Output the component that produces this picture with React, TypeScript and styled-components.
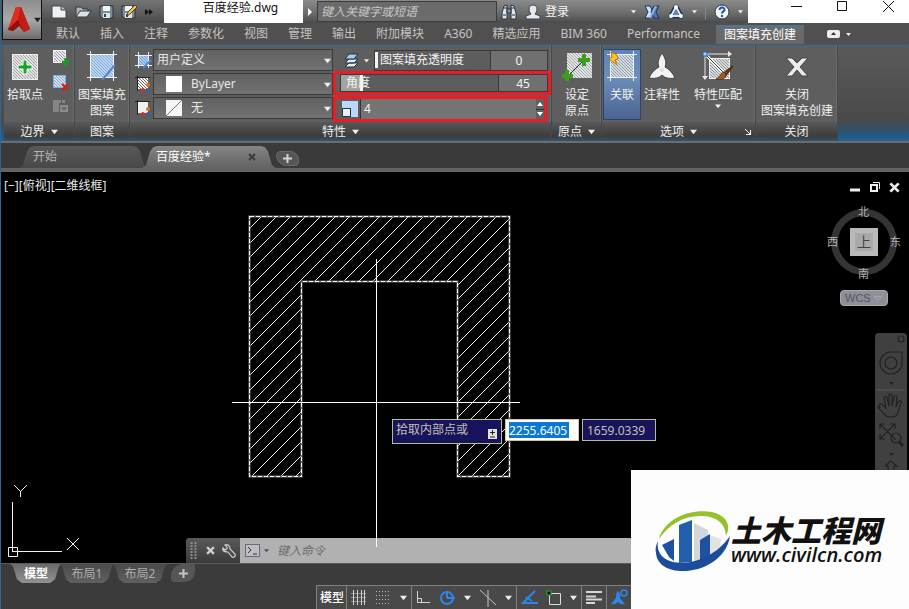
import React from "react";
import styled, { createGlobalStyle, css } from "styled-components";

const GlobalStyle = createGlobalStyle`
  * { box-sizing: border-box; }
  html, body { margin: 0; padding: 0; }
  body, button, input, select {
    font-family: "Noto Sans", "Noto Sans CJK SC", sans-serif;
    font-size: 12px;
    line-height: 16px;
  }
  button, input, select {
    margin: 0;
    padding: 0;
    border: 0;
    background: none;
    color: inherit;
    outline: none;
  }
  svg { display: block; flex: none; }
`;

const Window = styled.div`
  position: relative;
  display: flex;
  flex-direction: column;
  min-height: 100vh;
  overflow: hidden;
  background: #3b3b3b;
  border-left: 1px solid #2f6690;
  color: #e6e6e6;
`;

/* ---------- header ---------- */

const Header = styled.header`
  display: grid;
  grid-template-columns: 41px 1fr;
  grid-template-rows: 23px 21px;
  background: #505050;
  border-bottom: 1px solid #1f6391;
`;

const AppButton = styled.button`
  grid-row: 1 / 3;
  display: flex;
  align-items: center;
  gap: 3px;
  height: 40px;
  padding-left: 4px;
  margin-left: 1px;
  background: linear-gradient(#8d8d8d, #a9a9a9 50%, #6d6d6d);
  border: 1px solid #111;
  border-top: 0;
`;

const TitleBar = styled.div`
  display: flex;
  align-items: center;
  background: linear-gradient(#747474, #5c5c5c 60%, #4a4a4a);
`;

const QuickAccess = styled.div`
  display: flex;
  align-items: center;
  gap: 7px;
  width: 122px;
  padding-left: 9px;
`;

const IconButton = styled.button`
  display: flex;
  align-items: center;
  justify-content: center;
  flex: none;
`;

const DocumentTitle = styled.h1`
  width: 139px;
  height: 23px;
  margin: 0;
  padding-left: 14px;
  background: #fff;
  color: #111;
  font-size: 12px;
  font-weight: 400;
  line-height: 16px;
  text-align: center;
`;

const SearchBox = styled.input`
  width: 180px;
  height: 21px;
  margin-bottom: 1px;
  padding-left: 3px;
  background: #6b6b6b;
  border: 1px solid #3c3c3c;
  font-style: italic;
  &::placeholder { color: #c8c8c8; opacity: 1; }
`;

const TitleTools = styled.div`
  display: flex;
  flex: 1;
  align-items: center;
  gap: 8px;
  height: 23px;
  padding: 0 5px 0 3px;
  background: linear-gradient(#8b8b8b, #6a6a6a 60%, #4b4b4b);
`;

const SearchTools = styled.div`
  display: flex;
  align-items: center;
  gap: 4px;
`;

const UserTools = styled.div`
  display: flex;
  align-items: center;
  gap: 8px;
`;

const Spacer = styled.span`
  flex: 1;
`;

const Divider = styled.span`
  width: 1px;
  height: 16px;
  background: #858585;
`;

const SignIn = styled.button`
  display: flex;
  align-items: center;
  gap: 4px;
  color: #f4f4f4;
`;

const WindowControls = styled.div`
  display: flex;
  align-items: flex-start;
  justify-content: space-between;
  width: 161px;
  height: 23px;
  padding: 1px 15px 0 43px;
  background: #fff;
`;

const TabRow = styled.nav`
  display: flex;
  align-items: stretch;
  padding-left: 8px;
`;

const RibbonTab = styled.button<{ $active?: boolean }>`
  flex: none;
  padding: 1px 6px 0;
  margin-right: 8px;
  color: #c4c4c4;
  white-space: nowrap;
  ${(p) =>
    p.$active &&
    css`
      padding: 0 8px;
      margin: 2px 17px 0 2px;
      color: #fff;
      background: linear-gradient(#5b7182, #6a6a6a 40%, #676767);
    `}
`;

/* ---------- ribbon ---------- */

const Ribbon = styled.div`
  display: flex;
  height: 98px;
  padding-left: 3px;
  background: linear-gradient(#5a5a5a, #4a4a4a 78%, #2a5577 92%, #1c659c);
  border-bottom: 2px solid #6d6d6d;
`;

const Panel = styled.section<{ $w: number }>`
  display: flex;
  flex-direction: column;
  flex: none;
  width: ${(p) => p.$w}px;
  background: #5e5e5e;
  border-right: 1px solid #484848;
  box-shadow: inset -1px 0 #6b6b6b;
`;

const PanelBody = styled.div<{ $pad?: string }>`
  display: flex;
  flex: 1;
  padding: ${(p) => p.$pad ?? "4px 2px 0"};
`;

const PanelTitle = styled.div`
  display: flex;
  align-items: center;
  justify-content: center;
  gap: 6px;
  height: 19px;
  background: linear-gradient(#585858, #3c3c3c 75%, #31556f);
  color: #f0f0f0;
`;

const LauncherSlot = styled.span`
  position: absolute;
  right: 4px;
`;

const OptionsTitle = styled(PanelTitle)`
  position: relative;
`;

const BigButton = styled.button<{ $w?: number; $on?: boolean }>`
  display: flex;
  flex-direction: column;
  align-items: center;
  flex: none;
  width: ${(p) => (p.$w ? `${p.$w}px` : "auto")};
  height: 71px;
  padding-top: 2px;
  color: #f0f0f0;
  white-space: nowrap;
  & > svg:first-child { margin-bottom: 6px; }
  ${(p) =>
    p.$on &&
    css`
      background: linear-gradient(#5b86bb, #6d8dbb 40%, #4a6390);
      box-shadow: inset 0 0 0 1px #2b4569;
    `}
`;

const SmallStack = styled.div`
  display: flex;
  flex-direction: column;
  gap: 8px;
  padding: 0 0 0 8px;
`;

const PropertyColumn = styled.div`
  display: flex;
  flex-direction: column;
  gap: 2px;
  width: 198px;
`;

const PropertyRow = styled.div`
  display: flex;
  align-items: center;
  gap: 1px;
  height: 22px;
`;

const SelectShell = styled.label<{ $indent?: boolean }>`
  position: relative;
  display: flex;
  flex: 1;
  height: 22px;
  background: linear-gradient(#626262, #727272);
  border: 1px solid #3a3a3a;
  select {
    width: 100%;
    padding-left: ${(p) => (p.$indent ? 37 : 3)}px;
    appearance: none;
  }
  & > svg {
    position: absolute;
    right: 1px;
    top: 7px;
    pointer-events: none;
  }
`;

const Swatch = styled.span<{ $none?: boolean }>`
  position: absolute;
  left: 12px;
  top: 2px;
  width: 16px;
  height: 16px;
  background: ${(p) =>
    p.$none
      ? "linear-gradient(135deg, #f6f6f6 47%, #777 48%, #777 52%, #f6f6f6 53%)"
      : "#fff"};
`;

const ValueColumn = styled.div`
  display: flex;
  flex-direction: column;
  flex: 1;
`;

const TransparencyRow = styled.div`
  display: flex;
  align-items: center;
  height: 22px;
  padding: 0 3px 0 11px;
`;

const TransparencyGroup = styled.div`
  display: flex;
  width: 174px;
`;

const Highlight = styled.div<{ $inset?: boolean }>`
  display: flex;
  align-items: center;
  height: ${(p) => (p.$inset ? 26 : 24)}px;
  margin-top: ${(p) => (p.$inset ? 1 : 0)}px;
  margin-right: ${(p) => (p.$inset ? 4 : 0)}px;
  padding-left: ${(p) => (p.$inset ? 6 : 4)}px;
  border: 3px solid #ed1c24;
`;

const SliderShell = styled.label<{ $fill: number; $h: number }>`
  position: relative;
  display: flex;
  align-items: center;
  flex: 1;
  height: ${(p) => p.$h}px;
  border: 1px solid #3a3a3a;
  border-right: 0;
  padding-left: 5px;
  background: ${(p) =>
    `linear-gradient(90deg, #a2a2a2 ${p.$fill}px, #5d5d5d ${p.$fill}px)`};
  color: #f2f2f2;
  input {
    position: absolute;
    inset: 0;
    width: 100%;
    height: 100%;
    appearance: none;
    background: transparent;
  }
  input::-webkit-slider-thumb {
    appearance: none;
    width: 3px;
    height: 16px;
    background: #f2f2f2;
  }
`;

const ValueInput = styled.input<{ $w: number; $h: number }>`
  width: ${(p) => p.$w}px;
  height: ${(p) => p.$h}px;
  background: #707070;
  border: 1px solid #3a3a3a;
  color: #f4f4f4;
  text-align: center;
`;

const ScaleInput = styled.input`
  flex: 1;
  width: 0;
  height: 20px;
  margin-left: 2px;
  padding: 0 0 2px 3px;
  background: #747474;
  border-left: 1px solid #333;
  color: #f4f4f4;
`;

const Stepper = styled.span`
  display: flex;
  flex-direction: column;
  gap: 1px;
  width: 8px;
  height: 20px;
  background: #333;
  button {
    display: flex;
    flex: 1;
    align-items: center;
    justify-content: center;
    background: #606060;
  }
`;

/* ---------- file tabs ---------- */

const FileTabs = styled.div`
  display: flex;
  align-items: flex-end;
  height: 29px;
  padding: 0 0 4px 18px;
  background: linear-gradient(#3a3a3a 25px, #636363 25px);
`;

const FileTab = styled.div<{ $active?: boolean }>`
  display: flex;
  align-items: center;
  justify-content: space-between;
  width: ${(p) => (p.$active ? 134 : 129)}px;
  height: 22px;
  margin-right: ${(p) => (p.$active ? 0 : -6)}px;
  padding: 0 20px 0 14px;
  color: ${(p) => (p.$active ? "#fff" : "#b4b4b4")};
  background: ${(p) =>
    p.$active
      ? "linear-gradient(#858585, #636363)"
      : "linear-gradient(#595959, #484848)"};
  clip-path: polygon(
    0 100%, 4px 88%, 8px 25%, 11px 6%, 15px 0,
    calc(100% - 15px) 0, calc(100% - 11px) 6%, calc(100% - 8px) 25%,
    calc(100% - 4px) 88%, 100% 100%
  );
`;

const AddTab = styled.button`
  display: flex;
  align-items: center;
  justify-content: center;
  width: 23px;
  height: 15px;
  margin-bottom: 2px;
  background: #565656;
  border: 1px solid #6a6a6a;
  border-radius: 5px 10px 4px 12px;
`;

/* ---------- canvas ---------- */

const Canvas = styled.main`
  position: relative;
  flex: 1;
  min-height: 391px;
  overflow: hidden;
  background: #000;
`;

const ViewLabel = styled.div`
  padding: 6px 3px;
  color: #e8e8e8;
`;

const Drawing = styled.svg`
  position: absolute;
  left: 0;
  top: 0;
  width: 100%;
  height: 100%;
  pointer-events: none;
`;

const UcsIcon = styled.svg`
  position: absolute;
  left: 4px;
  bottom: 0;
`;

const ViewportControls = styled.div`
  position: absolute;
  top: 9px;
  right: 9px;
  display: flex;
  gap: 8px;
`;

const Compass = styled.div`
  position: absolute;
  top: 32px;
  right: 7px;
  width: 76px;
  height: 76px;
  color: #b5b5b5;
  font-size: 11px;
  line-height: 12px;
`;

const CompassRing = styled.div`
  position: absolute;
  inset: 5px;
  border: 7px solid #343434;
  border-radius: 50%;
`;

const CompassFace = styled.button`
  position: absolute;
  left: 24px;
  top: 24px;
  width: 28px;
  height: 28px;
  background: #a9a9a9;
  border: 5px solid #b9b9b9;
  color: #444;
  font-size: 14px;
`;

const CompassPoint = styled.span<{ $at: "n" | "e" | "s" | "w" }>`
  position: absolute;
  ${(p) =>
    ({
      n: "left: 32px; top: 2px;",
      e: "right: 1px; top: 32px;",
      s: "left: 32px; bottom: 0;",
      w: "left: 1px; top: 32px;",
    })[p.$at]}
`;

const WcsButton = styled.button`
  position: absolute;
  top: 118px;
  right: 21px;
  display: flex;
  align-items: center;
  justify-content: space-between;
  width: 48px;
  height: 16px;
  padding: 0 5px 0 4px;
  background: #8f8f97;
  border: 1px solid #a9a9b0;
  border-radius: 4px;
  color: #53535b;
  font-family: "Liberation Sans", sans-serif;
  font-size: 11px;
  line-height: 12px;
`;

const NavBar = styled.div`
  position: absolute;
  top: 161px;
  right: 2px;
  bottom: 0;
  width: 32px;
  background: #404040;
  border-radius: 4px 4px 0 0;
`;

const DynamicPrompt = styled.div`
  position: absolute;
  left: 391px;
  top: 247px;
  display: flex;
  align-items: flex-start;
  gap: 3px;
  color: #c2c2ac;
`;

const PromptText = styled.label`
  display: flex;
  justify-content: space-between;
  width: 110px;
  height: 25px;
  padding: 2px 4px 0 3px;
  background: #17135c;
  border: 1px solid #b9bd8b;
  svg { margin-top: 7px; }
`;

const ActiveCoordinate = styled.input`
  width: 74px;
  height: 22px;
  padding: 0 3px;
  background: linear-gradient(90deg, #0a78d6, #0a78d6) 3px 2px / 60px 16px no-repeat #fff;
  border: 1px solid #d8c69a;
  color: #fff;
`;

const Coordinate = styled.input`
  width: 74px;
  height: 22px;
  padding: 0 4px;
  background: #17135c;
  border: 1px solid #b9bd8b;
  color: #c2c2ac;
`;

const CommandBar = styled.div`
  position: absolute;
  left: 185px;
  right: 0;
  bottom: 0;
  display: flex;
  height: 25px;
`;

const CommandTools = styled.div`
  display: flex;
  align-items: center;
  justify-content: space-between;
  width: 54px;
  padding: 0 4px;
  background: linear-gradient(#5a5a5a, #3a3a3a);
  border-radius: 3px 0 0 0;
`;

const CommandEntry = styled.label`
  display: flex;
  flex: 1;
  align-items: center;
  gap: 4px;
  padding-left: 5px;
  background: #b1b1b1;
  input {
    width: 50%;
    margin-left: 4px;
    font-style: italic;
    color: #333;
  }
  input::placeholder { color: #6d6d6d; opacity: 1; }
`;

/* ---------- footer ---------- */

const Footer = styled.footer`
  display: flex;
  flex-direction: column;
  justify-content: space-between;
  height: 46px;
  background: #3b3b3b;
  border-top: 1px solid #5a5a5a;
`;

const LayoutTabs = styled.div`
  display: flex;
  height: 19px;
  padding-left: 9px;
`;

const LayoutTab = styled.button<{ $active?: boolean }>`
  width: ${(p) => (p.$active ? 52 : 56)}px;
  margin-right: -3px;
  color: ${(p) => (p.$active ? "#fff" : "#adadad")};
  font-weight: ${(p) => (p.$active ? 700 : 400)};
  background: ${(p) =>
    p.$active
      ? "linear-gradient(#6a6a6a, #919191)"
      : "linear-gradient(#4a4a4a, #606060)"};
  clip-path: polygon(
    0 0, 100% 0, calc(100% - 3px) 12%, calc(100% - 7px) 80%, calc(100% - 12px) 100%,
    12px 100%, 7px 80%, 3px 12%
  );
`;

const AddLayout = styled.button`
  display: flex;
  align-items: center;
  justify-content: center;
  width: 24px;
  height: 18px;
  margin-left: 6px;
  background: #565656;
  border-radius: 12px 2px 10px 3px;
`;

const StatusBar = styled.div`
  display: flex;
  height: 24px;
  margin-left: 315px;
  background: #494949;
  border-top: 1px solid #808080;
  border-left: 1px solid #808080;
`;

const StatusGroup = styled.div<{ $gap?: number }>`
  display: flex;
  align-items: center;
  gap: ${(p) => p.$gap ?? 8}px;
  padding: 0 4px;
  border-right: 1px solid #808080;
  color: #fff;
  font-weight: 500;
`;

const ModelButton = styled(StatusGroup).attrs({ as: "button" })`
  padding: 0 2px 0 3px;
`;

const SiteLogo = styled.a`
  position: absolute;
  right: 0;
  bottom: 0;
  display: flex;
  align-items: center;
  width: 278px;
  height: 139px;
  padding: 2px 0 0 24px;
  background: #fdfdfd;
  color: #111;
  text-decoration: none;
`;

const SiteText = styled.span`
  display: flex;
  flex-direction: column;
  font-style: italic;
  white-space: nowrap;
`;

const SiteName = styled.strong`
  font-family: "Noto Sans CJK SC", sans-serif;
  font-size: 30px;
  font-weight: 900;
  line-height: 29px;
`;

const SiteUrl = styled.span`
  font-family: "Open Sans", sans-serif;
  font-size: 20px;
  font-weight: 600;
  line-height: 22px;
`;

/* ---------- icons ---------- */

const Caret = ({ size = 7, color = "#f0f0f0" }: { size?: number; color?: string }) => (
  <svg width={size} height={size} viewBox="0 0 8 8">
    <path d="M0 2h8L4 7z" fill={color} />
  </svg>
);

const Plus = ({ color = "#d4d4d4" }: { color?: string }) => (
  <svg width="9" height="9" viewBox="0 0 9 9">
    <path d="M4.5 0v9M0 4.5h9" stroke={color} strokeWidth="2" />
  </svg>
);

const hatchLines = (w: number, h: number, step: number) =>
  Array.from({ length: Math.ceil((w + h) / step) }, (_, i) => `M${i * step - h} 0l${h} ${h}`).join("");

const HatchTile = ({
  size,
  fill = "#d4dadd",
  stroke = "#8d979c",
}: {
  size: number;
  fill?: string;
  stroke?: string;
}) => (
  <svg x="0" y="0" width={size} height={size} viewBox={`0 0 ${size} ${size}`}>
    <rect width={size} height={size} fill={fill} />
    <path d={hatchLines(size, size, 3)} stroke={stroke} strokeWidth="1" />
  </svg>
);

const AppLogo = () => (
  <svg width="24" height="26" viewBox="0 0 24 26">
    <path d="M9 0h5l9 22-6 3-5-6-6 5-5-1z" fill="#a5130f" />
    <path d="M9 0h5l-3 13L1 22z" fill="#e02c23" />
    <path d="M14 0l9 22-6 3-6-12z" fill="#c41d17" />
    <path d="M1 22l10-9 1 6-6 5z" fill="#8f100c" />
  </svg>
);

const NewIcon = () => (
  <svg width="17" height="14" viewBox="0 0 17 14">
    <path d="M1 1h9l5 4v8H1z" fill="#f0f0f0" stroke="#3d4750" />
    <path d="M10 1v4h5" fill="#b9c0c6" stroke="#3d4750" />
  </svg>
);

const OpenIcon = () => (
  <svg width="17" height="14" viewBox="0 0 17 14">
    <path d="M1 12V2h5l2 2h5v3" fill="#aeb5bb" stroke="#2e3942" />
    <path d="M1 12l4-6h11l-4 6z" fill="#dfe2e5" stroke="#2e3942" />
  </svg>
);

const SaveIcon = ({ pencil }: { pencil?: boolean }) => (
  <svg width={pencil ? 17 : 15} height="16" viewBox={pencil ? "0 0 17 16" : "0 0 15 16"}>
    <path d="M1 2h13v12H3l-2-2z" fill="#7c8b99" stroke="#25323d" />
    <path d="M4 2h7v5H4z" fill="#f2f4f6" />
    <path d="M4 9h7v5H4z" fill="#dfe4e8" />
    <path d="M5 10h2v3H5z" fill="#34424e" />
    {pencil && <path d="M6 12l1-4 7-7 2 2-7 7z" fill="#f3c25b" stroke="#57411c" />}
  </svg>
);

const MoreIcon = () => (
  <svg width="8" height="6" viewBox="0 0 8 6">
    <path d="M0 0l4 3-4 3zM4 0l4 3-4 3z" fill="#111" />
  </svg>
);

const BinocularsIcon = () => (
  <svg width="16" height="16" viewBox="0 0 16 16">
    <path d="M3 2l3-1v14H1V9zM10 1l3 1 2 7v6h-5z" fill="#dfe5ea" stroke="#26323d" />
    <path d="M6 5h4v4H6z" fill="#8795a1" stroke="#26323d" />
    <path d="M2 11h3M11 11h3M3 4h3M10 4h3" stroke="#26323d" />
  </svg>
);

const UserIcon = () => (
  <svg width="16" height="16" viewBox="0 0 16 16">
    <path d="M8 1c3 0 4 2 4 4s-1 4-2 5l5 2v3H1v-3l5-2C5 9 4 7 4 5s1-4 4-4z" fill="#e6eaed" stroke="#36424c" />
  </svg>
);

const ExchangeIcon = () => (
  <svg width="16" height="14" viewBox="0 0 16 14">
    <path d="M1 1h5l3 6-3 6H1l3-6z" fill="#d3e0f1" stroke="#163564" />
    <path d="M15 1h-5L7 7l3 6h5l-3-6z" fill="#4f78b6" stroke="#163564" />
    <path d="M6 13L12 1" stroke="#8fb0dd" strokeWidth="2" />
  </svg>
);

const ShareIcon = () => (
  <svg width="16" height="15" viewBox="0 0 16 15">
    <path d="M8 3L3 12h10z" fill="none" stroke="#1c3259" strokeWidth="5" strokeLinejoin="round" />
    <path d="M8 3L3 12h10z" fill="none" stroke="#dfe8f5" strokeWidth="2" strokeLinejoin="round" />
    <path d="M8 5L5 11h6z" fill="#6b85ad" />
    <circle cx="8" cy="3" r="2" fill="#fff" />
    <circle cx="3" cy="12" r="2" fill="#fff" />
    <circle cx="13" cy="12" r="2" fill="#fff" />
  </svg>
);

const HelpIcon = () => (
  <svg width="16" height="16" viewBox="0 0 16 16">
    <circle cx="8" cy="8" r="7" fill="#f2f6fb" stroke="#26364a" />
    <path d="M5.500 6c0-3.500 5.500-3 5 0c-.3 1.500-2.500 1.500-2.500 3.500" fill="none" stroke="#2256a6" strokeWidth="2" />
    <circle cx="8" cy="12" r="1.200" fill="#2256a6" />
  </svg>
);

const PickPointIcon = () => (
  <svg width="26" height="30" viewBox="0 0 26 30">
    <svg y="3" width="26" height="26">
      <HatchTile size={26} fill="#dfe1e2" stroke="#a2a6a8" />
    </svg>
    <rect x="0.500" y="3.500" width="25" height="25" fill="none" stroke="#eee" />
    <path d="M11 9h4v5h5v4h-5v5h-4v-5H6v-4h5z" fill="#16a524" stroke="#fff" />
  </svg>
);

const SelectBoundaryIcon = ({ remove }: { remove?: boolean }) => (
  <svg width="17" height="17" viewBox="0 0 17 17">
    <svg x="1" y="1" width="13" height="13">
      <HatchTile size={13} fill={remove ? "#cfe2f5" : "#e8e8e8"} stroke="#9aa3aa" />
    </svg>
    <rect x="1.500" y="1.500" width="12" height="12" fill="none" stroke={remove ? "#6fb2ee" : "#f2f2f2"} />
    {remove ? (
      <path d="M10 10l6 6M16 10l-6 6" stroke="#d81d17" strokeWidth="2" />
    ) : (
      <path d="M13.500 9v8M10 13h7" stroke="#12a01d" strokeWidth="2.500" />
    )}
  </svg>
);

const RecreateIcon = () => (
  <svg width="17" height="14" viewBox="0 0 17 14">
    <path d="M1 1h8v3H7v9H1z" fill="#858585" />
    <path d="M10 1h3v3h-3z" fill="#858585" />
    <path d="M8 6h8v7H8z" fill="#8c8c8c" />
    <path d="M10 8h4v3h-4z" fill="#6b6b6b" />
  </svg>
);

const HatchPatternIcon = ({ bolt }: { bolt?: boolean }) => (
  <svg width="30" height="30" viewBox="0 0 30 30">
    <svg x="4" y="4" width="22" height="22">
      <HatchTile size={22} fill={bolt ? "#d5dde4" : "#b9d6f6"} stroke={bolt ? "#8d99a5" : "#86a8d0"} />
    </svg>
    <path d="M3.500 0v30M26.500 0v30M0 3.500h30M0 26.500h30" stroke="#f0f4f8" />
    {bolt ? (
      <path d="M4 1l6 3 1 4-3 1 2 5-8-6 3-2z" fill="#ffc52e" stroke="#c86a10" />
    ) : (
      <path d="M28 14L15 29" stroke="#5b86bd" strokeWidth="2" />
    )}
  </svg>
);

const SmallPatternIcon = () => (
  <svg width="17" height="17" viewBox="0 0 17 17">
    <svg x="4" y="4" width="10" height="10">
      <HatchTile size={10} fill="#a9cdf5" stroke="#6f9bd0" />
    </svg>
    <path d="M3.500 0v16M13.500 0v16M0 3.500h17M0 13.500h17" stroke="#f0f4f8" />
    <path d="M16 8l-8 8" stroke="#4c86d0" strokeWidth="2" />
  </svg>
);

const ColorIcon = ({ background }: { background?: boolean }) => (
  <svg width="17" height="17" viewBox="0 0 17 17">
    <svg x="3" y="2" width="10" height="11">
      {background ? <rect width="11" height="11" fill="#f1f1f1" /> : <HatchTile size={11} fill="#fff" stroke="#666" />}
    </svg>
    <path d="M2.500 0v15M0 1.500h15" stroke="#222" />
    <circle cx="8" cy="14" r="2" fill="#d13023" />
    <circle cx="13" cy="9" r="2" fill="#e5741d" />
    <circle cx="13" cy="14" r="2" fill="#2d65b3" />
  </svg>
);

const LayersIcon = () => (
  <svg width="15" height="15" viewBox="0 0 15 15">
    <path d="M1 14l4-4h9l-4 4zM1 10l4-4h9l-4 4z" fill="#e7edf2" stroke="#26343f" />
    <path d="M1 6l4-5h9l-4 5z" fill="#a9cdf0" stroke="#26343f" />
  </svg>
);

const ScaleIcon = () => (
  <svg width="16" height="16" viewBox="0 0 16 16">
    <rect width="16" height="16" fill="#b9d8fb" />
    <rect x="0.500" y="7.500" width="8" height="8" fill="#eceff1" stroke="#26364a" />
  </svg>
);

const OriginIcon = () => (
  <svg width="30" height="30" viewBox="0 0 30 30">
    <svg x="5" y="2" width="25" height="25">
      <HatchTile size={25} fill="#e2e4e5" stroke="#a4a8aa" />
    </svg>
    <path d="M6 25L22 9" stroke="#222" />
    <path d="M22 3v12M16 9h12M5 19v11M0 25h11" stroke="#3c9d1e" strokeWidth="4" />
  </svg>
);

const AnnotativeIcon = () => (
  <svg width="28" height="30" viewBox="0 0 28 30">
    <path d="M14 2c3 5 5 9 3 14c4 2 8 6 10 11c-6 1-10 0-13-3c-3 3-7 4-13 3c2-5 6-9 10-11c-2-5 0-9 3-14z" fill="#f4f4f4" stroke="#444" />
    <circle cx="14" cy="19" r="2" fill="#dcdcdc" />
  </svg>
);

const MatchIcon = () => (
  <svg width="32" height="30" viewBox="0 0 32 30">
    <svg x="7" y="7" width="21" height="21">
      <HatchTile size={21} />
    </svg>
    <rect x="7.500" y="7.500" width="20" height="20" fill="none" stroke="#f3f3f3" />
    <path d="M4 3h23M3 4v22" stroke="#e9e9e9" />
    <path d="M26 0l4 3-4 3zM0 25l3 4 3-4z" fill="#e9e9e9" />
    <path d="M5 5l20 20" stroke="#fff" strokeWidth="3" />
    <path d="M5 5l20 20" stroke="#333" />
    <rect x="1" y="1" width="4" height="4" fill="#9fd0ff" stroke="#1f67b5" />
    <path d="M31 15l-9 7 2 2z" fill="#d38a45" stroke="#5b3311" strokeWidth="2" />
    <path d="M22 21c-4 1-3 5-8 7c5 2 10 0 10-5z" fill="#9c5a26" stroke="#5b3311" />
  </svg>
);

const CloseBigIcon = () => (
  <svg width="24" height="30" viewBox="0 0 24 30">
    <path d="M1 7h6l5 5 5-5h6l-8 9 8 9h-6l-5-6-5 6H1l8-9z" fill="#ececec" stroke="#444" />
  </svg>
);

const LauncherIcon = () => (
  <svg width="6" height="6" viewBox="0 0 6 6">
    <path d="M0 0l5 5M1 5.500h5M5.500 1v5" stroke="#fff" />
  </svg>
);

const CloseSmall = ({ color, size = 8 }: { color: string; size?: number }) => (
  <svg width={size} height={size} viewBox="0 0 8 8">
    <path d="M1 1l6 6M7 1L1 7" stroke={color} strokeWidth="2" />
  </svg>
);

const WrenchIcon = () => (
  <svg width="14" height="14" viewBox="0 0 14 14">
    <path
      d="M1 4l2 2 2-1V3L3 1c3-1 5 1 5 4l5 5c1 2-1 4-3 3L6 8C3 8 0 7 1 4z"
      fill="#4a4a4a"
      stroke="#d0d0d0"
      strokeWidth="1.200"
    />
  </svg>
);

/* ---------- drawing ---------- */

const OUTLINE = "M248.500 44.500H508.500V304.500H456.500V109.500H300.500V304.500H248.500Z";

const hatchOffsets = Array.from({ length: 36 }, (_, i) => Math.round(305 + i * 14.7));

const HatchedShape = () => (
  <Drawing>
    <defs>
      <clipPath id="outline">
        <path d={OUTLINE} />
      </clipPath>
    </defs>
    <g clipPath="url(#outline)" stroke="#f2f2f2" shapeRendering="crispEdges">
      {hatchOffsets.map((c) => (
        <path key={c} d={`M${c - 44} 44L${c - 305} 305`} />
      ))}
    </g>
    <path d={OUTLINE} fill="none" stroke="#777" strokeWidth="2" />
    <path d={OUTLINE} fill="none" stroke="#fff" strokeDasharray="4 2" shapeRendering="crispEdges" />
    <path d="M231 230.500H519M375.500 87V375" stroke="#fff" shapeRendering="crispEdges" />
  </Drawing>
);

const NavigationTools = () => (
  <svg width="32" height="140" viewBox="0 0 32 140" fill="none" stroke="#222" strokeWidth="1.200">
    <circle cx="26" cy="6" r="3" />
    <path d="M16 19h11v11a11 11 0 1 1-11-11z" />
    <circle cx="16" cy="30" r="6" />
    <path d="M14 49h5l-2.500 3zM14 120h5l-2.500 3z" fill="#222" stroke="none" />
    <path d="M2 57h28" stroke="#585858" />
    <path d="M5 74c-2-3 1-4 3-2l3 4-2-11c0-2 3-2 3 0l2 8v-10c0-3 3-3 3 0v10l2-9c1-2 3-2 3 0l-1 10 2-5c2-2 4-1 3 1l-3 9c-1 5-4 5-8 5s-6-3-12-10z" />
    <path d="M5 91l16 16M20 91L5 106M5 96v-5h5M15 91h5v5M5 101v5h5" />
    <circle cx="21" cy="105" r="5" />
    <path d="M24 109l4 4" strokeWidth="3" />
    <path d="M10 133l6-5 6 5h-3v7M13 140v-7h-3" />
  </svg>
);

const BrandMark = () => (
  <svg width="76" height="62" viewBox="0 0 76 62">
    <path d="M39 13l14 7v34H39z" fill="#d3d7db" />
    <path d="M55 25l11 4-3 18-8 6z" fill="#e0e2e5" />
    <path d="M7 35l12-6v22l-5-4z" fill="#1d52a1" />
    <path d="M24 15l13-5v42l-13 1z" fill="#2260ae" />
    <path d="M45 30l10-6v24l-10 3z" fill="#1d52a1" />
    <path d="M4 29C9 8 37-2 57 2c16 4 19 14 14 24C70 13 62 7 48 6C30 5 14 14 4 29z" fill="#95c12f" />
    <path d="M3 31C-2 60 50 62 75 26C69 66 3 72 1 43C0 39 1 35 3 31z" fill="#1c4c9c" />
  </svg>
);

/* ---------- page ---------- */

const TABS = ["默认", "插入", "注释", "参数化", "视图", "管理", "输出", "附加模块", "A360", "精选应用", "BIM 360", "Performance"];

export default function App() {
  return (
    <>
      <GlobalStyle />
      <Window>
        <Header>
          <AppButton aria-label="应用程序菜单">
            <AppLogo />
            <Caret color="#222" />
          </AppButton>
          <TitleBar>
            <QuickAccess>
              <IconButton aria-label="新建"><NewIcon /></IconButton>
              <IconButton aria-label="打开"><OpenIcon /></IconButton>
              <IconButton aria-label="保存"><SaveIcon /></IconButton>
              <IconButton aria-label="另存为"><SaveIcon pencil /></IconButton>
              <IconButton aria-label="更多"><MoreIcon /></IconButton>
            </QuickAccess>
            <DocumentTitle>百度经验.dwg</DocumentTitle>
            <TitleTools>
              <SearchTools>
                <svg width="7" height="8" viewBox="0 0 7 8">
                  <path d="M2 0l4 4-4 4z" fill="#fff" />
                </svg>
                <SearchBox aria-label="搜索" placeholder="键入关键字或短语" />
                <UserTools>
                  <IconButton aria-label="查找"><BinocularsIcon /></IconButton>
                  <SignIn><UserIcon />登录</SignIn>
                </UserTools>
              </SearchTools>
              <Spacer />
              <Caret size={5} />
              <IconButton aria-label="Exchange"><ExchangeIcon /></IconButton>
              <IconButton aria-label="共享"><ShareIcon /></IconButton>
              <Caret size={5} />
              <Divider />
              <IconButton aria-label="帮助"><HelpIcon /></IconButton>
              <Caret size={5} />
            </TitleTools>
            <WindowControls>
              <IconButton aria-label="最小化">
                <svg width="11" height="11"><path d="M0 5.500h11" stroke="#111" /></svg>
              </IconButton>
              <IconButton aria-label="最大化">
                <svg width="11" height="11"><path d="M.5 .5h9v9h-9z" fill="none" stroke="#111" /></svg>
              </IconButton>
              <IconButton aria-label="关闭窗口">
                <svg width="11" height="11"><path d="M0 0l11 11M11 0L0 11" stroke="#111" /></svg>
              </IconButton>
            </WindowControls>
          </TitleBar>
          <TabRow>
            {TABS.map((t) => (
              <RibbonTab key={t}>{t}</RibbonTab>
            ))}
            <RibbonTab $active>图案填充创建</RibbonTab>
            <RibbonTab aria-label="功能区显示">
              <svg width="24" height="8" viewBox="0 0 24 8">
                <rect width="13" height="8" rx="2" fill="#eee" />
                <path d="M4 5l2.500-3L9 5z" fill="#333" />
                <path d="M19 3h5l-2.500 3z" fill="#eee" />
              </svg>
            </RibbonTab>
          </TabRow>
        </Header>

        <Ribbon>
          <Panel $w={71}>
            <PanelBody>
              <BigButton $w={38}>
                <PickPointIcon />
                <span>拾取点</span>
              </BigButton>
              <SmallStack>
                <IconButton aria-label="选择边界对象"><SelectBoundaryIcon /></IconButton>
                <IconButton aria-label="删除边界对象"><SelectBoundaryIcon remove /></IconButton>
                <IconButton aria-label="重新创建边界"><RecreateIcon /></IconButton>
              </SmallStack>
            </PanelBody>
            <PanelTitle>边界<Caret /></PanelTitle>
          </Panel>

          <Panel $w={55}>
            <PanelBody>
              <BigButton $w={50}>
                <HatchPatternIcon />
                <span>图案填充</span>
                <span>图案</span>
              </BigButton>
            </PanelBody>
            <PanelTitle>图案</PanelTitle>
          </Panel>

          <Panel $w={422}>
            <PanelBody $pad="4px 0 0 5px">
              <PropertyColumn>
                <PropertyRow>
                  <SmallPatternIcon />
                  <SelectShell>
                    <select aria-label="图案类型"><option>用户定义</option></select>
                    <Caret />
                  </SelectShell>
                </PropertyRow>
                <PropertyRow>
                  <ColorIcon />
                  <SelectShell $indent>
                    <Swatch />
                    <select aria-label="图案颜色"><option>ByLayer</option></select>
                    <Caret />
                  </SelectShell>
                </PropertyRow>
                <PropertyRow>
                  <ColorIcon background />
                  <SelectShell $indent>
                    <Swatch $none />
                    <select aria-label="背景色"><option>无</option></select>
                    <Caret />
                  </SelectShell>
                </PropertyRow>
              </PropertyColumn>
              <ValueColumn>
                <TransparencyRow>
                  <IconButton aria-label="图层"><LayersIcon /></IconButton>
                  <Spacer />
                  <Caret size={5} />
                  <Spacer />
                  <TransparencyGroup>
                    <SliderShell $fill={0} $h={21}>
                      图案填充透明度
                      <input type="range" min="0" max="90" defaultValue="0" aria-label="图案填充透明度" />
                    </SliderShell>
                    <ValueInput $w={58} $h={21} aria-label="透明度值" defaultValue="0" />
                  </TransparencyGroup>
                </TransparencyRow>
                <Highlight>
                  <SliderShell $fill={20} $h={18}>
                    角度
                    <input type="range" min="0" max="359" defaultValue="45" aria-label="角度" />
                  </SliderShell>
                  <ValueInput $w={50} $h={18} aria-label="角度值" defaultValue="45" />
                </Highlight>
                <Highlight $inset>
                  <ScaleIcon />
                  <ScaleInput aria-label="间距" defaultValue="4" />
                  <Stepper>
                    <button aria-label="增加"><svg width="6" height="4"><path d="M0 4l3-4 3 4z" fill="#fff" /></svg></button>
                    <button aria-label="减少"><svg width="6" height="4"><path d="M0 0h6L3 4z" fill="#fff" /></svg></button>
                  </Stepper>
                </Highlight>
              </ValueColumn>
            </PanelBody>
            <PanelTitle>特性<Caret /></PanelTitle>
          </Panel>

          <Panel $w={50}>
            <PanelBody>
              <BigButton $w={46}>
                <OriginIcon />
                <span>设定</span>
                <span>原点</span>
              </BigButton>
            </PanelBody>
            <PanelTitle>原点<Caret /></PanelTitle>
          </Panel>

          <Panel $w={154}>
            <PanelBody $pad="4px 1px 0">
              <BigButton $w={38} $on>
                <HatchPatternIcon bolt />
                <span>关联</span>
              </BigButton>
              <BigButton $w={42}>
                <AnnotativeIcon />
                <span>注释性</span>
              </BigButton>
              <BigButton $w={70}>
                <MatchIcon />
                <span>特性匹配</span>
                <Caret size={6} />
              </BigButton>
            </PanelBody>
            <OptionsTitle>
              选项<Caret />
              <LauncherSlot><LauncherIcon /></LauncherSlot>
            </OptionsTitle>
          </Panel>

          <Panel $w={82}>
            <PanelBody>
              <BigButton $w={78}>
                <CloseBigIcon />
                <span>关闭</span>
                <span>图案填充创建</span>
              </BigButton>
            </PanelBody>
            <PanelTitle>关闭</PanelTitle>
          </Panel>
        </Ribbon>

        <FileTabs>
          <FileTab>开始</FileTab>
          <FileTab $active>
            百度经验*
            <IconButton aria-label="关闭文件"><CloseSmall color="#3c3c3c" /></IconButton>
          </FileTab>
          <AddTab aria-label="新建文件"><Plus /></AddTab>
        </FileTabs>

        <Canvas>
          <ViewLabel>[−][俯视][二维线框]</ViewLabel>

          <CommandBar>
            <CommandTools>
              <svg width="8" height="18" viewBox="0 0 8 18">
                <path d="M1.500 0v18M5.500 0v18" stroke="#8a8a8a" strokeWidth="2" strokeDasharray="2 1" />
              </svg>
              <IconButton aria-label="关闭命令行"><CloseSmall color="#d0d0d0" size={9} /></IconButton>
              <IconButton aria-label="自定义"><WrenchIcon /></IconButton>
            </CommandTools>
            <CommandEntry>
              <svg width="15" height="13" viewBox="0 0 15 13">
                <rect x="0.500" y="0.500" width="14" height="12" fill="#bdbdc4" stroke="#6b6b78" />
                <path d="M3 3l3 3-3 3M8 10h4" fill="none" stroke="#333" />
              </svg>
              <Caret size={5} color="#555" />
              <input aria-label="命令" placeholder="键入命令" />
            </CommandEntry>
          </CommandBar>

          <HatchedShape />

          <UcsIcon width="76" height="78" viewBox="0 0 76 78" fill="none" stroke="#f2f2f2">
            <path d="M7.500 17v50M8 66.500h49M3.500 62.500h9v9h-9zM9 0l6.500 6.500L22 0M15.500 6v6M62 53l12 12M74 53L62 65" />
          </UcsIcon>

          <DynamicPrompt>
            <PromptText htmlFor="coord-x">
              拾取内部点或
              <svg width="9" height="10" viewBox="0 0 9 10">
                <rect width="9" height="10" fill="#e2e2e2" />
                <path d="M4.500 1v5M2 3.500h5M2 8h5" stroke="#222" />
              </svg>
            </PromptText>
            <ActiveCoordinate id="coord-x" defaultValue="2255.6405" />
            <Coordinate aria-label="Y" defaultValue="1659.0339" />
          </DynamicPrompt>

          <ViewportControls>
            <IconButton aria-label="最小化视口">
              <svg width="12" height="12"><path d="M1 9h10" stroke="#eee" strokeWidth="3" /></svg>
            </IconButton>
            <IconButton aria-label="还原视口">
              <svg width="12" height="12" fill="none" stroke="#eee">
                <path d="M2 4h6v6H2z" strokeWidth="2" />
                <path d="M4 1.500h6.500V8" />
              </svg>
            </IconButton>
            <IconButton aria-label="关闭视口"><CloseSmall color="#eee" size={11} /></IconButton>
          </ViewportControls>

          <Compass>
            <CompassRing />
            <CompassFace>上</CompassFace>
            <CompassPoint $at="n">北</CompassPoint>
            <CompassPoint $at="e">东</CompassPoint>
            <CompassPoint $at="s">南</CompassPoint>
            <CompassPoint $at="w">西</CompassPoint>
          </Compass>
          <WcsButton>
            WCS
            <svg width="8" height="4"><path d="M0 .5h8L4 4z" fill="none" stroke="#a5a5ad" /></svg>
          </WcsButton>
          <NavBar><NavigationTools /></NavBar>
        </Canvas>

        <Footer>
          <LayoutTabs>
            <LayoutTab $active>模型</LayoutTab>
            <LayoutTab>布局1</LayoutTab>
            <LayoutTab>布局2</LayoutTab>
            <AddLayout aria-label="新建布局"><Plus color="#c4c4c4" /></AddLayout>
          </LayoutTabs>
          <StatusBar>
            <ModelButton>模型</ModelButton>
            <StatusGroup $gap={10}>
              <svg width="15" height="15" stroke="#d0d0d0">
                <path d="M2.500 0v15M6.500 0v15M10.500 0v15M13.500 0v15" />
                <path d="M0 3.500h15M0 7.500h15M0 11.500h15" strokeOpacity="0.500" />
              </svg>
              <svg width="14" height="14">
                <path d="M0 .5h14M0 4.500h14M0 8.500h14M0 12.500h14" stroke="#bbb" strokeDasharray="1 2" />
              </svg>
              <Caret />
            </StatusGroup>
            <StatusGroup>
              <svg width="15" height="14" fill="none" stroke="#d6d6d6"><path d="M1.500 0v11.500H14M1.500 7.500h4v4" /></svg>
              <svg width="17" height="16" viewBox="0 0 17 16" fill="none" stroke="#2b87ee" strokeWidth="2">
                <circle cx="8" cy="8" r="6" /><path d="M8 8h8M8 8V2" />
              </svg>
              <Caret />
              <svg width="18" height="18" stroke="#c6c6c6"><path d="M1 1l16 15M9 1v17" strokeWidth="1" /></svg>
              <Caret />
            </StatusGroup>
            <StatusGroup>
              <svg width="17" height="15" fill="none" stroke="#2b87ee" strokeWidth="2"><path d="M14 1L2 13h15M5 7l6 4" /></svg>
              <svg width="16" height="16" viewBox="0 0 16 16">
                <path d="M3.500 3.500h11v11h-11z" fill="none" stroke="#ddd" />
                <rect x="1" y="1" width="4" height="4" fill="#111" stroke="#19b52a" />
              </svg>
              <Caret />
            </StatusGroup>
            <StatusGroup>
              <svg width="16" height="13"><path d="M0 1h16M0 5.500h10M0 8.500h16M0 12h9" stroke="#d6d6d6" strokeWidth="2" /></svg>
            </StatusGroup>
            <StatusGroup>
              <svg width="17" height="17" viewBox="0 0 17 17" fill="#2b87ee">
                <path d="M7 2c2 3 3 5 2 7l5 6c-3 1-5 0-7-2c-2 2-4 3-7 2l5-6C5 6 5 4 7 2z" />
                <circle cx="13" cy="4" r="3" fill="none" stroke="#2b87ee" strokeWidth="1.500" />
              </svg>
            </StatusGroup>
          </StatusBar>
        </Footer>

        <SiteLogo href="#">
          <BrandMark />
          <SiteText>
            <SiteName>土木工程网</SiteName>
            <SiteUrl>www.civilcn.com</SiteUrl>
          </SiteText>
        </SiteLogo>
      </Window>
    </>
  );
}
